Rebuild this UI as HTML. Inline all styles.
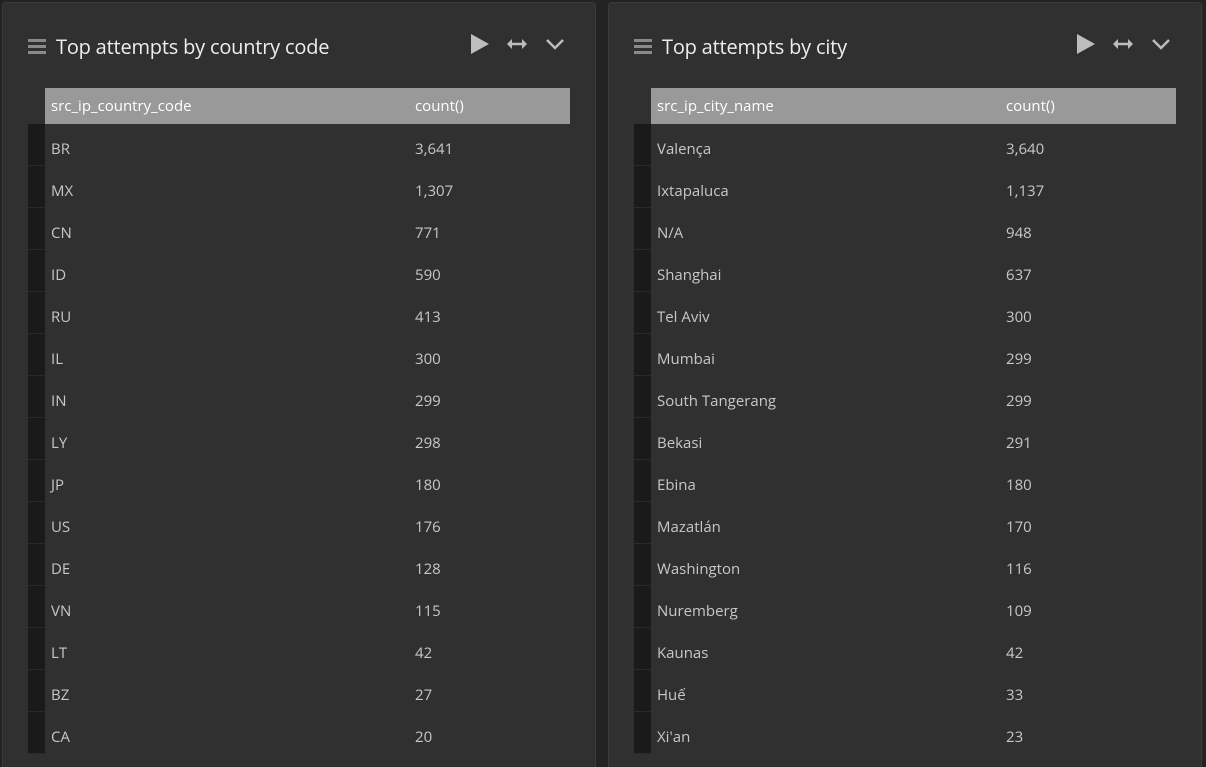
<!DOCTYPE html>
<html style="overflow:hidden;height:767px"><head><meta charset="utf-8"><style>
*{margin:0;padding:0;box-sizing:border-box}
body{width:1206px;height:767px;background:#232323;font-family:"Open Sans","Liberation Sans","DejaVu Sans",sans-serif;overflow:hidden;position:relative}
.p{position:absolute;top:2px;width:594px;height:780px;background:#303030;border:1px solid #3a3a3a;border-radius:4px}
.ham{position:absolute;left:25px;top:36px;width:18px;height:16px}
.ham i{display:block;height:3px;background:#8a8a8a;margin-bottom:3px}
.t{position:absolute;left:53px;top:30px;font-size:20px;color:#eee;letter-spacing:-0.2px}
.ic{position:absolute;top:29px}
.strip{position:absolute;left:25px;top:121px;width:17px;height:630px;background:#1a1a1a}
.strip div{height:42px;border-bottom:1px solid #2a2a2a}
.hd{position:absolute;left:42px;top:85px;width:525px;height:36px;background:#999;color:#fff;font-size:15px}
.hd span,.r span{position:absolute;top:8px}
.r{position:absolute;left:42px;width:525px;height:42px;color:#c8c8c8;font-size:15px}
.r span{top:15px}
.a{left:6px}
</style></head><body>
<div class="p" style="left:2px" id="p1"></div>
<div class="p" style="left:608px" id="p2"></div>
<script>
function build(id,title,col,rows,bx){
 var p=document.getElementById(id);
 var h='<div class="ham"><i></i><i></i><i></i></div><div class="t">'+title+'</div>'+
 '<svg class="ic" style="left:466px" width="22" height="24" viewBox="0 0 22 24"><path d="M2 2 L20 12 L2 22 Z" fill="#bdbdbd"/></svg>'+
 '<svg class="ic" style="left:503px" width="22" height="24" viewBox="0 0 22 24"><path d="M4 12 H18" stroke="#bdbdbd" stroke-width="2.5"/><path d="M1 12 L6 7 V17 Z M21 12 L16 7 V17 Z" fill="#bdbdbd"/></svg>'+
 '<svg class="ic" style="left:541px" width="22" height="24" viewBox="0 0 22 24"><path d="M3 8 L11 16 L19 8" stroke="#bdbdbd" stroke-width="2.5" fill="none"/></svg>'+
 '<div class="strip">'+'<div></div>'.repeat(15)+'</div>'+
 '<div class="hd"><span class="a">'+col+'</span><span style="left:'+bx+'px">count()</span></div>';
 rows.forEach(function(r,i){h+='<div class="r" style="top:'+(121+42*i)+'px"><span class="a">'+r[0]+'</span><span style="left:'+bx+'px">'+r[1]+'</span></div>';});
 p.innerHTML=h;
}
build('p1','Top attempts by country code','src_ip_country_code',[["BR","3,641"],["MX","1,307"],["CN","771"],["ID","590"],["RU","413"],["IL","300"],["IN","299"],["LY","298"],["JP","180"],["US","176"],["DE","128"],["VN","115"],["LT","42"],["BZ","27"],["CA","20"]],370);
build('p2','Top attempts by city','src_ip_city_name',[["Valença","3,640"],["Ixtapaluca","1,137"],["N/A","948"],["Shanghai","637"],["Tel Aviv","300"],["Mumbai","299"],["South Tangerang","299"],["Bekasi","291"],["Ebina","180"],["Mazatlán","170"],["Washington","116"],["Nuremberg","109"],["Kaunas","42"],["Huế","33"],["Xi'an","23"]],355);
</script>
</body></html>
